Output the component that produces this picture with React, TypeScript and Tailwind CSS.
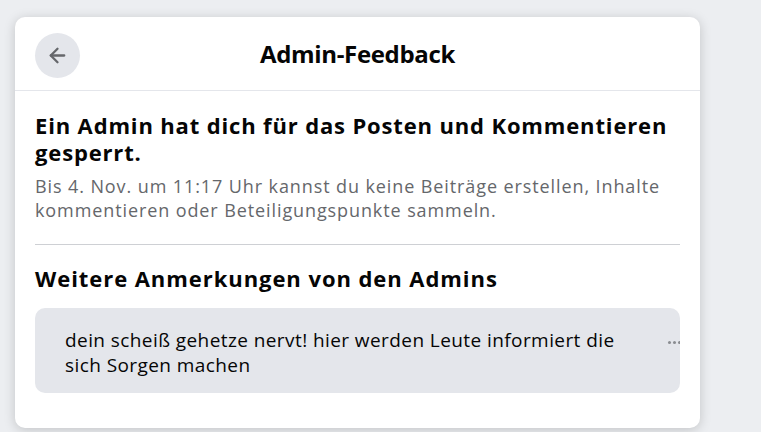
import { ArrowLeft } from "lucide-react"

const AdminFeedback = () => {
  return (
    <div className="min-h-screen bg-[#eceef1] pt-[17px] pl-[15px] font-['Open_Sans',sans-serif] text-[#050505]">
      <div className="w-[685px] rounded-[10px] bg-white shadow-[0_2px_12px_rgba(0,0,0,0.18)]">
        {/* Header */}
        <div className="relative flex h-[74px] items-center justify-center border-b border-[#e4e6eb]">
          <button className="absolute left-[20px] top-[16px] flex h-[45px] w-[45px] items-center justify-center rounded-full bg-[#e4e6eb]">
            <ArrowLeft size={23} strokeWidth={2.4} color="#65676b" />
          </button>
          <h1 className="text-[24px] font-bold leading-[30px] tracking-[-0.35px]">
            Admin-Feedback
          </h1>
        </div>

        {/* Content */}
        <div className="px-[20px] pt-[21px] pb-[35px]">
          <h2 className="text-[22px] font-bold leading-[27px] tracking-[0.85px]">
            Ein Admin hat dich für das Posten und Kommentieren gesperrt.
          </h2>
          <p className="mt-[9px] text-[18px] leading-[23.5px] tracking-[0.9px] text-[#65676b]">
            Bis 4. Nov. um 11:17 Uhr kannst du keine Beiträge erstellen, Inhalte
            kommentieren oder Beteiligungspunkte sammeln.
          </p>

          <div className="mt-[22px] h-px bg-[#ced0d4]" />

          <h2 className="mt-[20px] text-[22px] font-bold leading-[27px] tracking-[0.94px]">
            Weitere Anmerkungen von den Admins
          </h2>

          <div className="relative mt-[16px] h-[85px] overflow-hidden rounded-[10px] bg-[#e4e6eb] pl-[30px] pt-[20px]">
            <p className="w-[585px] text-[19px] leading-[25px] tracking-[0.42px]">
              dein scheiß gehetze nervt! hier werden Leute informiert die sich Sorgen machen
            </p>
            <div className="absolute right-[-1px] top-[33px] flex gap-[2px]">
              <span className="h-[3px] w-[3px] rounded-full bg-[#8a8d91]" />
              <span className="h-[3px] w-[3px] rounded-full bg-[#8a8d91]" />
              <span className="h-[3px] w-[3px] rounded-full bg-[#8a8d91]" />
            </div>
          </div>
        </div>
      </div>
    </div>
  )
}

export default AdminFeedback
